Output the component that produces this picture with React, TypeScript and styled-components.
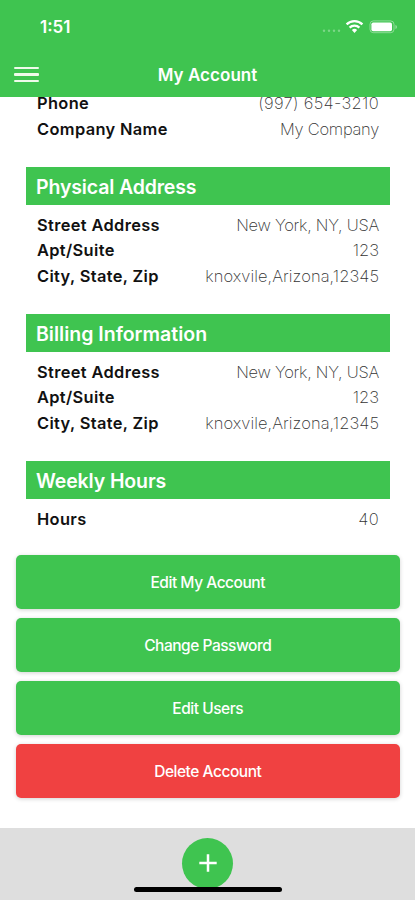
import React from "react";
import styled, { createGlobalStyle } from "styled-components";

const GREEN = "#3fc450";

const GlobalStyle = createGlobalStyle`
  * { box-sizing: border-box; }
  body { margin: 0; background: #fff; font-family: Inter, "Liberation Sans", sans-serif; }
`;

const Screen = styled.div`
  width: 415px;
  height: 900px;
  display: flex;
  flex-direction: column;
  overflow: hidden;
  background: #fff;
`;

const Header = styled.header`
  flex: none;
  height: 97px;
  background: ${GREEN};
  color: #fff;
`;

const StatusBar = styled.div`
  height: 54px;
  padding: 0 18px 0 40px;
  display: flex;
  align-items: center;
  justify-content: space-between;
`;

const Time = styled.span`
  font-size: 17px;
  font-weight: 600;
  line-height: 20px;
`;

const NavBar = styled.div`
  height: 41px;
  padding: 0 14px;
  display: grid;
  grid-template-columns: 26px 1fr 26px;
  align-items: center;
`;

const NavTitle = styled.h1`
  margin: 0;
  font-size: 17px;
  font-weight: 600;
  line-height: 20px;
  letter-spacing: 0.05px;
  text-align: center;
`;

const MenuButton = styled.button`
  border: 0;
  padding: 0;
  height: 16px;
  background: none;
  display: flex;
  flex-direction: column;
  justify-content: space-between;
`;

const MenuLine = styled.span`
  width: 25px;
  height: 2.4px;
  border-radius: 1px;
  background: #effbea;
`;

const Content = styled.main`
  flex: 1;
  min-height: 0;
  overflow: hidden;
`;

const Details = styled.div`
  margin-top: -6.6px;
  padding: 0 25.5px 0 26px;
  display: flex;
  flex-direction: column;
  gap: 25.4px;
`;

const SectionBox = styled.section`
  display: flex;
  flex-direction: column;
`;

const SectionTitle = styled.h2<{ $tracking?: number }>`
  margin: 0 0 7.1px;
  height: 38px;
  padding: 0 10px;
  background: ${GREEN};
  color: #fff;
  font-size: 19.5px;
  font-weight: 600;
  line-height: 40px;
  letter-spacing: ${(p) => p.$tracking ?? 0}px;
`;

const Row = styled.div`
  height: 25.5px;
  padding: 0 10.5px 0 11px;
  display: flex;
  align-items: center;
  justify-content: space-between;
  white-space: nowrap;
  line-height: 20px;
`;

const Label = styled.span`
  font-size: 16.4px;
  font-weight: 600;
  color: #111;
  letter-spacing: 0.36px;
`;

const Value = styled.span<{ $tracking?: number }>`
  font-size: 16.5px;
  font-weight: 200;
  color: #333;
  letter-spacing: ${(p) => p.$tracking ?? 0}px;
`;

const Actions = styled.div`
  margin-top: 24px;
  padding: 0 15px 0 15.5px;
  display: flex;
  flex-direction: column;
  gap: 9px;
`;

const ActionButton = styled.button<{ $danger?: boolean }>`
  height: 54px;
  border: 0;
  border-radius: 5px;
  background: ${(p) => (p.$danger ? "#f04141" : GREEN)};
  color: #fff;
  font-family: inherit;
  font-size: 15.5px;
  font-weight: 500;
  letter-spacing: -0.47px;
  box-shadow: 0 1px 4px rgba(0, 0, 0, 0.18);
`;

const Footer = styled.footer`
  flex: none;
  height: 72px;
  padding-top: 9.5px;
  background: #dedede;
  display: flex;
  flex-direction: column;
  align-items: center;
`;

const AddButton = styled.button`
  flex: none;
  width: 51px;
  height: 51px;
  border: 0;
  border-radius: 50%;
  padding: 0;
  background: ${GREEN};
  display: flex;
  align-items: center;
  justify-content: center;
`;

const HomeIndicator = styled.div`
  flex: none;
  position: relative;
  width: 148px;
  height: 5.4px;
  margin-top: -2px;
  border-radius: 3px;
  background: #000;
`;

const StatusIcons = () => (
  <svg width="80" height="20" viewBox="0 0 80 20" fill="none">
    <g fill="#fff" opacity="0.32">
      <circle cx="7" cy="13.7" r="1.2" />
      <circle cx="12" cy="13.7" r="1.2" />
      <circle cx="17" cy="13.7" r="1.2" />
      <circle cx="22" cy="13.7" r="1.2" />
    </g>
    <g stroke="#fff" strokeWidth="2.3">
      <path d="M29.6 7.4a11.2 11.2 0 0 1 15.8 0" />
      <path d="M32.6 10.6a7 7 0 0 1 9.8 0" />
    </g>
    <path d="M34.9 13.1a3.7 3.7 0 0 1 5.2 0L37.5 16z" fill="#fff" />
    <rect x="53" y="3.9" width="24" height="11.8" rx="3.4" stroke="#fff" strokeOpacity="0.4" />
    <rect x="54.4" y="5.4" width="20.6" height="8.8" rx="1.8" fill="#fff" />
    <path d="M78.5 7.9v4c1.8-.7 1.8-3.3 0-4z" fill="#fff" opacity="0.5" />
  </svg>
);

const PlusIcon = () => (
  <svg width="20" height="20" viewBox="0 0 20 20">
    <path d="M10 1.3v17.4M1.3 10h17.4" stroke="#fff" strokeWidth="2.5" />
  </svg>
);

type Entry = { label: string; value: string; tracking?: number };

const contact: Entry[] = [
  { label: "Phone", value: "(997) 654-3210", tracking: 0.32 },
  { label: "Company Name", value: "My Company", tracking: -0.28 },
];

const address: Entry[] = [
  { label: "Street Address", value: "New York, NY, USA", tracking: -0.28 },
  { label: "Apt/Suite", value: "123" },
  { label: "City, State, Zip", value: "knoxvile,Arizona,12345", tracking: 0.06 },
];

type SectionProps = { title?: string; tracking?: number; entries: Entry[] };

const Section = ({ title, tracking, entries }: SectionProps) => (
  <SectionBox>
    {title && <SectionTitle $tracking={tracking}>{title}</SectionTitle>}
    {entries.map((e) => (
      <Row key={e.label}>
        <Label>{e.label}</Label>
        <Value $tracking={e.tracking}>{e.value}</Value>
      </Row>
    ))}
  </SectionBox>
);

export default function App() {
  return (
    <>
      <GlobalStyle />
      <Screen>
        <Header>
          <StatusBar>
            <Time>1:51</Time>
            <StatusIcons />
          </StatusBar>
          <NavBar>
            <MenuButton aria-label="Menu">
              <MenuLine />
              <MenuLine />
              <MenuLine />
            </MenuButton>
            <NavTitle>My Account</NavTitle>
          </NavBar>
        </Header>
        <Content>
          <Details>
            <Section entries={contact} />
            <Section title="Physical Address" tracking={-0.15} entries={address} />
            <Section title="Billing Information" entries={address} />
            <Section
              title="Weekly Hours"
              tracking={-0.12}
              entries={[{ label: "Hours", value: "40", tracking: 0.3 }]}
            />
          </Details>
          <Actions>
            <ActionButton>Edit My Account</ActionButton>
            <ActionButton>Change Password</ActionButton>
            <ActionButton>Edit Users</ActionButton>
            <ActionButton $danger>Delete Account</ActionButton>
          </Actions>
        </Content>
        <Footer>
          <AddButton aria-label="Add">
            <PlusIcon />
          </AddButton>
          <HomeIndicator />
        </Footer>
      </Screen>
    </>
  );
}
